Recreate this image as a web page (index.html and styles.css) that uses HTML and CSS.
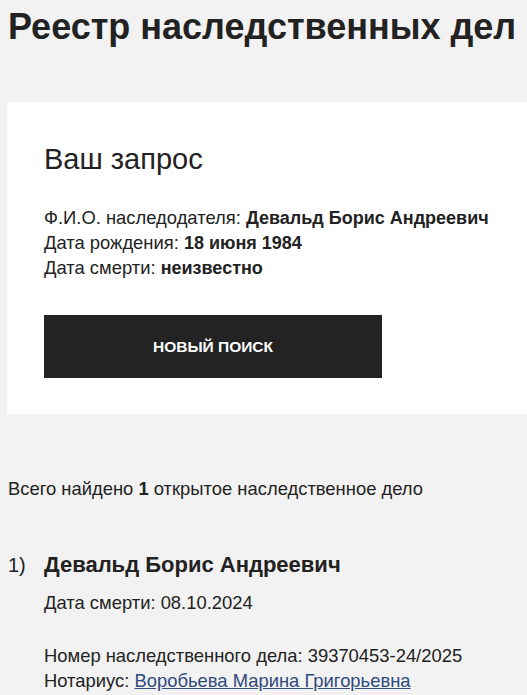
FILE: index.html
```html
<!DOCTYPE html>
<html lang="ru">
<head>
<meta charset="utf-8">
<title>Реестр наследственных дел</title>
<link rel="stylesheet" href="styles.css">
</head>
<body>
<h1 class="page-title">Реестр наследственных дел</h1>
<section class="card">
  <h2 class="card-title">Ваш запрос</h2>
  <div class="info">
    <div>Ф.И.О. наследодателя: <b>Девальд Борис Андреевич</b></div>
    <div>Дата рождения: <b>18 июня 1984</b></div>
    <div>Дата смерти: <b>неизвестно</b></div>
  </div>
  <button class="btn">НОВЫЙ ПОИСК</button>
</section>
<p class="summary">Всего найдено <b>1</b> открытое наследственное дело</p>
<ol class="results">
  <li class="result">
    <span class="num">1)</span>
    <div class="result-body">
      <div class="result-name">Девальд Борис Андреевич</div>
      <div class="result-line">Дата смерти: 08.10.2024</div>
      <div class="result-details">
        <div>Номер наследственного дела: 39370453-24/2025</div>
        <div>Нотариус: <a href="#" class="link">Воробьева Марина Григорьевна</a></div>
      </div>
    </div>
  </li>
</ol>
</body>
</html>
```
FILE: styles.css
```css
html, body {
  margin: 0;
  padding: 0;
}
body {
  background: #f2f2f2;
  color: #222;
  font-family: "Liberation Sans", Arial, sans-serif;
  font-size: 18.4px;
}
.page-title {
  margin: 0;
  padding: 5px 0 0 8px;
  font-size: 36px;
  line-height: 44px;
  font-weight: bold;
  white-space: nowrap;
}
.card {
  background: #fff;
  margin: 53px 0 0 7px;
  padding: 41px 0 36px 37px;
}
.card-title {
  margin: 0;
  font-size: 29px;
  line-height: 33px;
  font-weight: normal;
}
.info {
  margin-top: 29px;
  line-height: 25px;
}
.info b {
  font-size: 18px;
  line-height: 1;
}
.btn {
  display: block;
  margin-top: 35px;
  width: 338px;
  height: 63px;
  border: 0;
  background: #232323;
  color: #fff;
  font-family: "Liberation Sans", Arial, sans-serif;
  font-size: 15.5px;
  font-weight: bold;
}
.summary {
  margin: 62px 0 0 8px;
  line-height: 25px;
}
.results {
  list-style: none;
  margin: 49px 0 0 0;
  padding: 0 0 0 8px;
}
.result {
  display: flex;
}
.num {
  width: 36px;
  font-size: 20px;
  line-height: 30px;
}
.result-name {
  font-size: 22px;
  font-weight: bold;
  line-height: 30px;
}
.result-line {
  margin-top: 10px;
  line-height: 25px;
}
.result-details {
  margin-top: 28px;
  line-height: 25px;
}
.link {
  color: #2f4a7c;
}
```
